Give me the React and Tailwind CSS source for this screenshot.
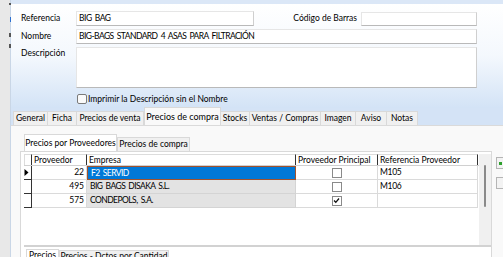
import React from "react";

const font = { fontFamily: '"Lato", "Noto Sans", sans-serif' };

function Input({ className = "", children }) {
  return (
    <div className={"bg-white border border-[#e6e6e6] border-b-[#b9b9b9] border-r-[#cfcfcf] flex items-center pl-[2px] text-black " + className}>
      {children}
    </div>
  );
}

function Check({ checked }) {
  return (
    <div className="w-[10px] h-[10px] border border-[#8a8a8a] bg-white flex items-center justify-center">
      {checked && (
        <svg width="7" height="7" viewBox="0 0 7 7">
          <path d="M1 3.5 L2.8 5.3 L6 1.5" stroke="#111" strokeWidth="1.3" fill="none" />
        </svg>
      )}
    </div>
  );
}

const tabs = [
  ["General", "w-[35px]"],
  ["Ficha", "w-[30px]"],
  ["Precios de venta", "w-[68px]"],
  ["Precios de compra", "w-[77px]"],
  ["Stocks", "w-[30px]"],
  ["Ventas / Compras", "w-[72px]"],
  ["Imagen", "w-[36px]"],
  ["Aviso", "w-[32px]"],
  ["Notas", "w-[32px]"],
];

const rows = [
  { id: "22", emp: "F2 SERVID", pri: false, ref: "M105", sel: true },
  { id: "495", emp: "BIG BAGS DISAKA S.L.", pri: false, ref: "M106" },
  { id: "575", emp: "CONDEPOLS, S.A.", pri: true, ref: "" },
];

export default function App() {
  return (
    <div className="w-[503px] h-[257px] overflow-hidden flex bg-[#f9f9f9] text-[8.5px] leading-none text-black" style={font}>
      {/* left strip */}
      <div className="w-[11px] h-full bg-[#e8e8e8] border-r border-[#c9d6e6] flex flex-col">
        <div className="ml-[9px] mt-[3px] w-[2px] h-[2px] bg-[#555]" />
        <div className="ml-[10px] mt-[12px] w-[1px] h-[5px] bg-[#2a6fd0]" />
        <div className="ml-[9px] mt-[11px] w-[2px] h-[4px] bg-[#555]" />
        <div className="ml-[9px] mt-[7px] w-[2px] h-[4px] bg-[#555]" />
      </div>

      <div className="flex-1 flex flex-col">
        {/* header */}
        <div className="h-[108px] bg-gradient-to-b from-[#ffffff] via-[#f4f8fd] to-[#d3e3f6] border-t-[4px] border-[#dbe7f7] pl-[10px] pt-[7px] flex flex-col">
          <div className="flex items-center h-[15px]">
            <div className="w-[55px]">Referencia</div>
            <Input className="w-[178px] h-[15px] tracking-[-0.5px] [word-spacing:1.5px]">BIG BAG</Input>
            <div className="w-[107px] text-right pr-[4px]">Código de Barras</div>
            <Input className="w-[116px] h-[14px]" />
          </div>
          <div className="flex items-center h-[15px] mt-[3px]">
            <div className="w-[55px]">Nombre</div>
            <Input className="w-[401px] h-[15px] tracking-[-0.55px] [word-spacing:1.5px]">BIG-BAGS STANDARD 4 ASAS PARA FILTRACIÓN</Input>
          </div>
          <div className="flex mt-[3px]">
            <div className="w-[55px] pt-[2px]">Descripción</div>
            <Input className="w-[401px] h-[41px]" />
          </div>
          <div className="flex items-center mt-[6px] ml-[56px] gap-[1px]">
            <div className="w-[10px] h-[10px] rounded-[2px] border border-[#7a7a7a] bg-[#fafafa]" />
            <div>Imprimir la Descripción sin el Nombre</div>
          </div>
        </div>

        {/* tab strip */}
        <div className="h-[18px] bg-[#d4e3f6] flex items-end pl-[3px] border-b border-[#dadada]">
          {tabs.map(([t, w]) => {
            const active = t === "Precios de compra";
            return (
              <div
                key={t}
                className={
                  w +
                  " flex items-center justify-center border border-b-0 border-[#d9d9d9] " +
                  (active ? "h-[18px] bg-[#f9f9f9] text-[9px]" : "h-[14px] bg-[#f0f0f0] -ml-[1px]")
                }
              >
                {t}
              </div>
            );
          })}
        </div>

        {/* body */}
        <div className="flex-1 flex pl-[9px] pt-[8px] overflow-hidden">
          <div className="flex flex-col">
            <div className="flex items-end h-[17px] pl-[4px]">
              <div className="w-[93px] h-[17px] bg-white border border-b-0 border-[#d9d9d9] flex items-center justify-center">
                Precios por Proveedores
              </div>
              <div className="w-[73px] h-[14px] bg-[#f0f0f0] border border-b-0 border-[#d9d9d9] flex items-center justify-center">
                Precios de compra
              </div>
            </div>
            <div className="w-[472px] h-[120px] bg-white border border-[#d9d9d9] flex flex-col pl-[3px] pt-[2px]">
              <div className="flex h-[93px] border-b-2 border-[#d2d2d2] w-[467px]">
                <div className="flex flex-col w-[455px]">
                  {/* header row */}
                  <div className="flex h-[12px] border-b border-[#d0d0d0]">
                    <div className="w-[8px] border-r border-[#333] border-l border-t border-[#dcdcdc] border-r-[#333]" />
                    <div className="w-[55px] pl-[2px] flex items-center border-r border-[#333] border-t border-t-[#dcdcdc]">Proveedor</div>
                    <div className="w-[209px] pl-[2px] flex items-center border-r border-[#333] border-t border-t-[#dcdcdc]">Empresa</div>
                    <div className="w-[82px] pl-[2px] flex items-center border-r border-[#333] border-t border-t-[#dcdcdc]">Proveedor Principal</div>
                    <div className="w-[100px] pl-[2px] flex items-center border-r border-[#333] border-t border-t-[#dcdcdc]">Referencia Proveedor</div>
                  </div>
                  {rows.map((r) => (
                    <div key={r.id} className="flex h-[14px]">
                      <div className="w-[8px] border-r border-b border-[#333] flex items-center">
                        {r.sel && (
                          <svg width="5" height="7" viewBox="0 0 5 7">
                            <path d="M0.5 0 L4.5 3.5 L0.5 7 Z" fill="#000" />
                          </svg>
                        )}
                      </div>
                      <div className="w-[55px] pr-[2px] flex items-center justify-end border-r border-b border-[#dadada]">{r.id}</div>
                      <div
                        className={
                          "w-[209px] pl-[3px] flex items-center tracking-[-0.55px] [word-spacing:1.5px] " +
                          (r.sel ? "bg-[#0078d7] text-white border border-[#a0522d]" : "bg-[#e3e3e3] border-r border-b border-[#d4d4d4]")
                        }
                      >
                        {r.emp}
                      </div>
                      <div className="w-[82px] flex items-center justify-center border-r border-b border-[#dadada]">
                        <Check checked={r.pri} />
                      </div>
                      <div className="w-[100px] pl-[2px] flex items-center border-r border-b border-[#dadada] tracking-[-0.3px]">{r.ref}</div>
                    </div>
                  ))}
                </div>
                <div className="w-[12px] bg-[#f0f0f0] flex justify-center pt-[11px]">
                  <div className="w-[2px] h-[42px] bg-[#8a8a8a] rounded" />
                </div>
              </div>
              <div className="flex pl-[2px] mt-[2px] h-[12px] items-end">
                <div className="w-[33px] h-[12px] bg-white border border-b-0 border-[#d9d9d9] flex items-center justify-center">Precios</div>
                <div className="w-[110px] h-[11px] bg-[#f0f0f0] border border-b-0 border-[#d9d9d9] flex items-center justify-center">
                  Precios - Dctos por Cantidad
                </div>
              </div>
            </div>
          </div>
          <div className="flex flex-col gap-[8px] pl-[4px] pt-[23px]">
            <div className="w-[12px] h-[12px] border border-[#b5b5b5] bg-[#f3f3f3] flex items-center pl-[2px]">
              <div className="w-[3px] h-[3px] bg-[#2da02d]" />
            </div>
            <div className="w-[12px] h-[12px] border border-[#b5b5b5] bg-[#f3f3f3]" />
          </div>
        </div>
      </div>
    </div>
  );
}
